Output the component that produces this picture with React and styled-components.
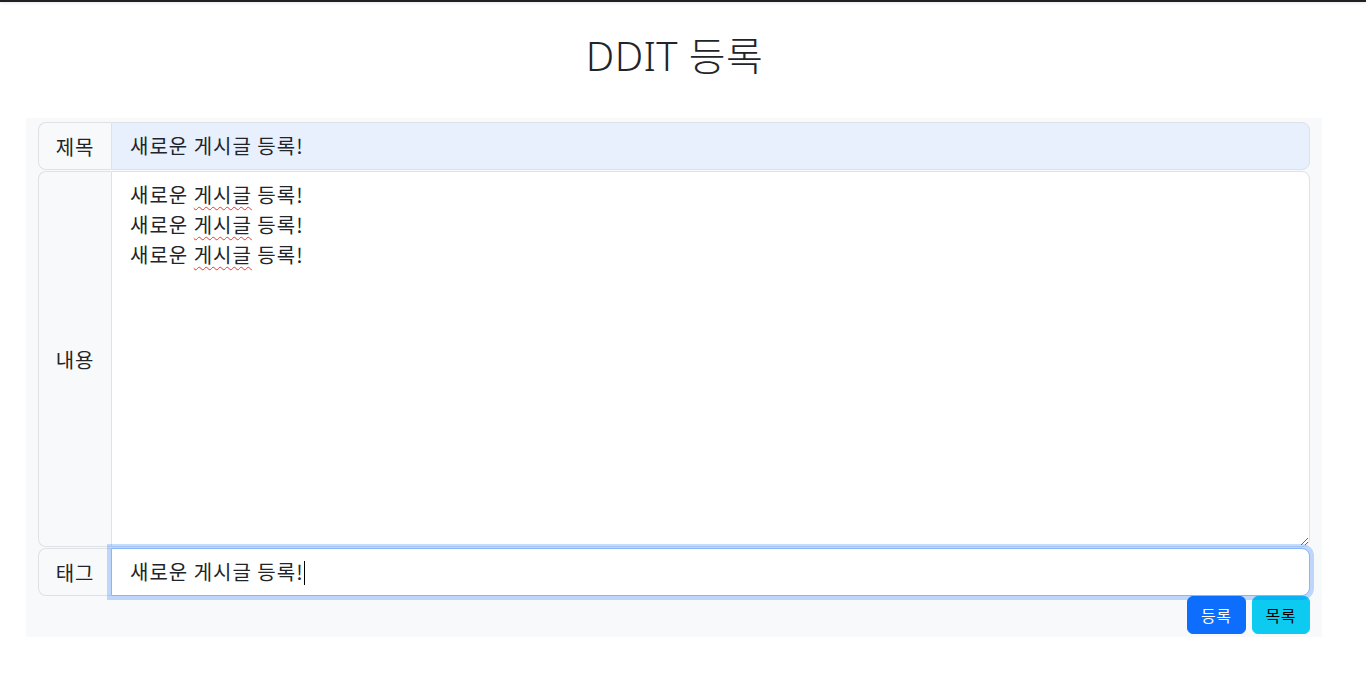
import React from 'react';
import styled, { createGlobalStyle } from 'styled-components';

const GlobalStyle = createGlobalStyle`
  * { box-sizing: border-box; }
  body {
    margin: 0;
    background: #fff;
    color: #212529;
    font-family: "Noto Sans", "Noto Sans CJK KR", sans-serif;
  }
`;

const TopBar = styled.div`
  height: 2px;
  background: #202124;
  box-shadow: 0 1px 3px rgba(0, 0, 0, 0.12);
`;

const Page = styled.div`
  width: 1349px;
`;

const Title = styled.h1`
  margin: 30px 0 38px;
  text-align: center;
  font-size: 40px;
  line-height: 48px;
  font-weight: 300;
  letter-spacing: 0.4px;
  color: #212529;
`;

const Panel = styled.div`
  width: 1296px;
  margin-left: 26px;
  padding: 4px 12px 3px;
  background: #f8f9fa;
  display: flex;
  flex-direction: column;
`;

const Group = styled.div`
  display: flex;
  align-items: stretch;
  margin-top: ${({ $gap }) => $gap || 0}px;
  position: relative;
  z-index: ${({ $focus }) => ($focus ? 5 : 1)};
`;

const Label = styled.div`
  width: 73px;
  flex-shrink: 0;
  display: flex;
  align-items: center;
  justify-content: center;
  background: #f8f9fa;
  border: 1px solid #dee2e6;
  border-right: 0;
  border-radius: 8px 0 0 8px;
  font-family: "Noto Sans CJK KR", sans-serif;
  font-size: 20px;
  letter-spacing: 0.8px;
  color: #212529;
`;

const Field = styled.div`
  flex: 1;
  min-width: 0;
  height: ${({ $h }) => $h || 48}px;
  padding: 8px 16px 8px 18px;
  background: ${({ $fill }) => $fill || '#fff'};
  border: 1px solid ${({ $focus }) => ($focus ? '#86b7fe' : '#dee2e6')};
  border-radius: 0 8px 8px 0;
  box-shadow: ${({ $focus }) => ($focus ? '0 0 0 4px rgba(13, 110, 253, 0.25)' : 'none')};
  font-family: "Noto Sans CJK KR", sans-serif;
  font-size: 20px;
  letter-spacing: 1px;
  line-height: 30px;
  color: #212529;
  white-space: pre;
`;

const Area = styled(Field)`
  resize: vertical;
  overflow: auto;
`;

const Wavy = styled.span`
  text-decoration: underline wavy #e53935;
  text-decoration-thickness: 1px;
  text-underline-offset: 3px;
`;

const Caret = styled.span`
  display: inline-block;
  width: 1px;
  height: 24px;
  vertical-align: -5px;
  background: #000;
`;

const Actions = styled.div`
  display: flex;
  justify-content: flex-end;
  gap: 6px;
`;

const Button = styled.button`
  height: 38px;
  padding: 0 13px;
  border: 1px solid ${({ $bg }) => $bg};
  border-radius: 6px;
  background: ${({ $bg }) => $bg};
  color: ${({ $fg }) => $fg};
  font-family: "Noto Sans CJK KR", sans-serif;
  font-size: 16px;
  letter-spacing: 0.5px;
  cursor: pointer;
`;

const Line = () => (
  <div>
    새로운 <Wavy>게시글</Wavy> 등록!
  </div>
);

export default function App() {
  return (
    <>
      <GlobalStyle />
      <TopBar />
      <Page>
        <Title>DDIT 등록</Title>
        <Panel>
          <Group>
            <Label>제목</Label>
            <Field $fill="#e8f0fe">새로운 게시글 등록!</Field>
          </Group>
          <Group $gap={1}>
            <Label>내용</Label>
            <Area $h={376}>
              <Line />
              <Line />
              <Line />
            </Area>
          </Group>
          <Group $gap={1} $focus>
            <Label>태그</Label>
            <Field $focus>
              새로운 게시글 등록!
              <Caret />
            </Field>
          </Group>
          <Actions>
            <Button $bg="#0d6efd" $fg="#fff">등록</Button>
            <Button $bg="#0dcaf0" $fg="#000">목록</Button>
          </Actions>
        </Panel>
      </Page>
    </>
  );
}
